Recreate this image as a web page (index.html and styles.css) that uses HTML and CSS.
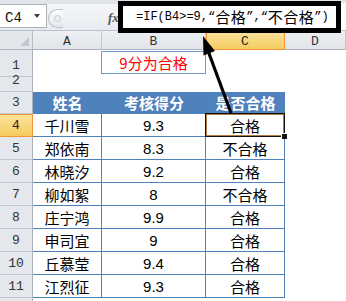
FILE: index.html
```html
<!DOCTYPE html>
<html lang="zh-CN">
<head>
<meta charset="utf-8">
<title>IF 公式</title>
<link rel="stylesheet" href="styles.css">
</head>
<body>
<div class="app">
  <div class="edge"></div>
  <div class="fbar">
    <div class="namebox"><span class="ref">C4</span><span class="dd"></span></div>
    <div class="splitter"><span class="dot"></span></div>
    <div class="fx">fx</div>
    <div class="formula"><span class="a">=IF(B4&gt;=9,“</span><span class="cj">合格</span><span class="a">”,“</span><span class="cj">不合格</span><span class="a">”)</span></div>
  </div>
  <div class="sheet">
    <div class="corner"><span class="tri"></span></div>
    <div class="ch">A</div>
    <div class="ch">B</div>
    <div class="ch on">C</div>
    <div class="ch">D</div>

    <div class="rh tall">1</div>
    <div class="c"></div>
    <div class="c"><div class="title">9分为合格</div></div>
    <div class="c"></div>
    <div class="c"></div>

    <div class="rh">2</div>
    <div class="c"></div><div class="c"></div><div class="c"></div><div class="c"></div>

    <div class="rh">3</div>
    <div class="th">姓名</div>
    <div class="th">考核得分</div>
    <div class="th">是否合格</div>
    <div class="c"></div>

    <div class="rh on">4</div>
    <div class="td">千川雪</div><div class="td num">9.3</div><div class="td active">合格<span class="selbox"></span><span class="handle"></span></div><div class="c"></div>
    <div class="rh">5</div>
    <div class="td">郑依南</div><div class="td num">8.3</div><div class="td">不合格</div><div class="c"></div>
    <div class="rh">6</div>
    <div class="td">林晓汐</div><div class="td num">9.2</div><div class="td">合格</div><div class="c"></div>
    <div class="rh">7</div>
    <div class="td">柳如絮</div><div class="td num">8</div><div class="td">不合格</div><div class="c"></div>
    <div class="rh">8</div>
    <div class="td">庄宁鸿</div><div class="td num">9.9</div><div class="td">合格</div><div class="c"></div>
    <div class="rh">9</div>
    <div class="td">申司宜</div><div class="td num">9</div><div class="td">合格</div><div class="c"></div>
    <div class="rh">10</div>
    <div class="td">丘慕莹</div><div class="td num">9.4</div><div class="td">合格</div><div class="c"></div>
    <div class="rh">11</div>
    <div class="td">江烈征</div><div class="td num">9.3</div><div class="td">合格</div><div class="c"></div>
    <div class="rh"></div>
    <div class="c"></div><div class="c"></div><div class="c"></div><div class="c"></div>
  </div>
  <div class="callout"></div>
  <svg class="arrow" width="346" height="301" viewBox="0 0 346 301">
    <line x1="231" y1="113" x2="207" y2="48" stroke="#000" stroke-width="3.2"/>
    <polygon points="203,36 215,51 203.5,55.5" fill="#000"/>
  </svg>
</div>
</body>
</html>
```
FILE: styles.css
```css
html, body {
  margin: 0;
  padding: 0;
  background: #fff;
}
.app {
  position: relative;
  width: 346px;
  height: 301px;
  overflow: hidden;
  background: #fff;
  font-family: "Noto Sans CJK SC", "Liberation Sans", sans-serif;
}
.edge {
  height: 4px;
  background: #e1e5ea;
}
.fbar {
  display: flex;
  align-items: center;
  height: 26px;
  background: linear-gradient(#f4f6f9, #e8ecf1);
  border-bottom: 1px solid #b9c2cc;
}
.namebox {
  align-self: flex-start;
  box-sizing: border-box;
  width: 47px;
  height: 24px;
  border: 1px solid #a9b1bb;
  border-left: none;
  background: #fff;
  display: flex;
  align-items: center;
  padding-left: 5px;
  padding-top: 4px;
}
.ref {
  font: 14px "Liberation Mono", monospace;
  color: #111;
}
.dd {
  margin-left: auto;
  margin-right: 6px;
  width: 0;
  height: 0;
  margin-top: -4px;
  border-left: 3.5px solid transparent;
  border-right: 3.5px solid transparent;
  border-top: 4px solid #3a3a3a;
}
.splitter {
  box-sizing: border-box;
  width: 15px;
  height: 19px;
  margin-left: 1px;
  margin-top: 3px;
  border: 1px solid #b8c0ca;
  border-right: none;
  border-radius: 10px 0 0 10px;
  background: linear-gradient(#fcfdfe, #e4e8ed);
  display: flex;
  align-items: center;
  padding-left: 5px;
}
.dot {
  box-sizing: border-box;
  width: 7px;
  height: 7px;
  border-radius: 50%;
  border: 1px solid #c4cad2;
  background: #eceff3;
}
.fx {
  width: 12px;
  margin-left: 45px;
  font: italic bold 13px "Liberation Serif", serif;
  color: #555;
  margin-top: 1px;
}
.formula {
  flex: 1;
  align-self: stretch;
  background: #fff;
  display: flex;
  align-items: center;
  padding-left: 16px;
  white-space: nowrap;
  margin-top: -1px;
}
.formula .a {
  font: 12px "Liberation Mono", monospace;
  color: #000;
}
.formula .cj {
  font: 15px "Noto Sans CJK SC", sans-serif;
  color: #000;
  letter-spacing: 0.5px;
}
.callout {
  position: absolute;
  left: 118px;
  top: 1px;
  width: 223px;
  height: 32px;
  box-sizing: border-box;
  border: 5px solid #000;
}
.arrow {
  position: absolute;
  left: 0;
  top: 0;
  pointer-events: none;
}
.sheet {
  display: grid;
  grid-template-columns: 33px 69px 104px 79px 61px;
  grid-template-rows: 19px 27px 15px 22px repeat(8, 23px) 23px;
}
.sheet > div {
  box-sizing: border-box;
  min-width: 0;
}
.corner {
  background: #e3e6ea;
  border-right: 1px solid #b5bdc7;
  border-bottom: 1px solid #a9b2bd;
  position: relative;
}
.tri {
  position: absolute;
  right: 3px;
  bottom: 3px;
  width: 0;
  height: 0;
  border-left: 9px solid transparent;
  border-bottom: 9px solid #c3c8cf;
}
.ch {
  background: linear-gradient(#eef0f3, #e1e4e8);
  border-right: 1px solid #c3c9d1;
  border-bottom: 1px solid #a9b2bd;
  display: flex;
  align-items: center;
  justify-content: center;
  font: 13px "Liberation Mono", monospace;
  color: #333;
  padding-top: 2px;
}
.ch.on {
  background: linear-gradient(#fbe39f, #f5cc60);
  border-right: 1px solid #f2963a;
  border-bottom: 1px solid #f2963a;
  box-shadow: inset 1px 0 0 #f2963a;
  color: #222;
}
.rh {
  background: #e4e7eb;
  border-right: 1px solid #a9b2bd;
  border-bottom: 1px solid #c3c9d1;
  display: flex;
  align-items: flex-end;
  justify-content: center;
  font: 13px "Liberation Mono", monospace;
  color: #333;
  padding-bottom: 3px;
  line-height: 15px;
}
.rh.on {
  background: linear-gradient(#fbe39f, #f5cc60);
  border-right: 1px solid #f2963a;
  border-bottom: 1px solid #f2963a;
  box-shadow: inset 0 1px 0 #f2963a;
  color: #222;
}
.c {
  background: #fff;
}
.title {
  box-sizing: border-box;
  height: 23px;
  margin-top: 1px;
  margin-left: -1px;
  border: 1px solid #6f98cc;
  display: flex;
  align-items: center;
  justify-content: center;
  color: #ff0000;
  font-size: 15px;
  line-height: 1;
}
.th {
  background: #4f81bd;
  color: #fff;
  font-weight: bold;
  font-size: 15px;
  display: flex;
  align-items: center;
  justify-content: center;
  border-bottom: 1px solid #4f81bd;
}
.td {
  position: relative;
  background: #fff;
  color: #000;
  font-size: 15px;
  display: flex;
  align-items: center;
  justify-content: center;
  border-right: 1px solid #4f81bd;
  border-bottom: 1px solid #4f81bd;
  padding-top: 1px;
}
.td.num {
  font-family: "Liberation Sans", sans-serif;
  font-size: 15px;
}
.td.active {
  z-index: 2;
}
.selbox {
  position: absolute;
  left: -1px;
  top: -1px;
  right: -1px;
  bottom: -1px;
  border: 1px solid #111;
  box-shadow: inset 0 0 0 1px #b07c42;
}
.handle {
  position: absolute;
  right: -3px;
  bottom: -3px;
  width: 5px;
  height: 5px;
  background: #111;
  border: 1px solid #fff;
  border-right: none;
  border-bottom: none;
}
```
